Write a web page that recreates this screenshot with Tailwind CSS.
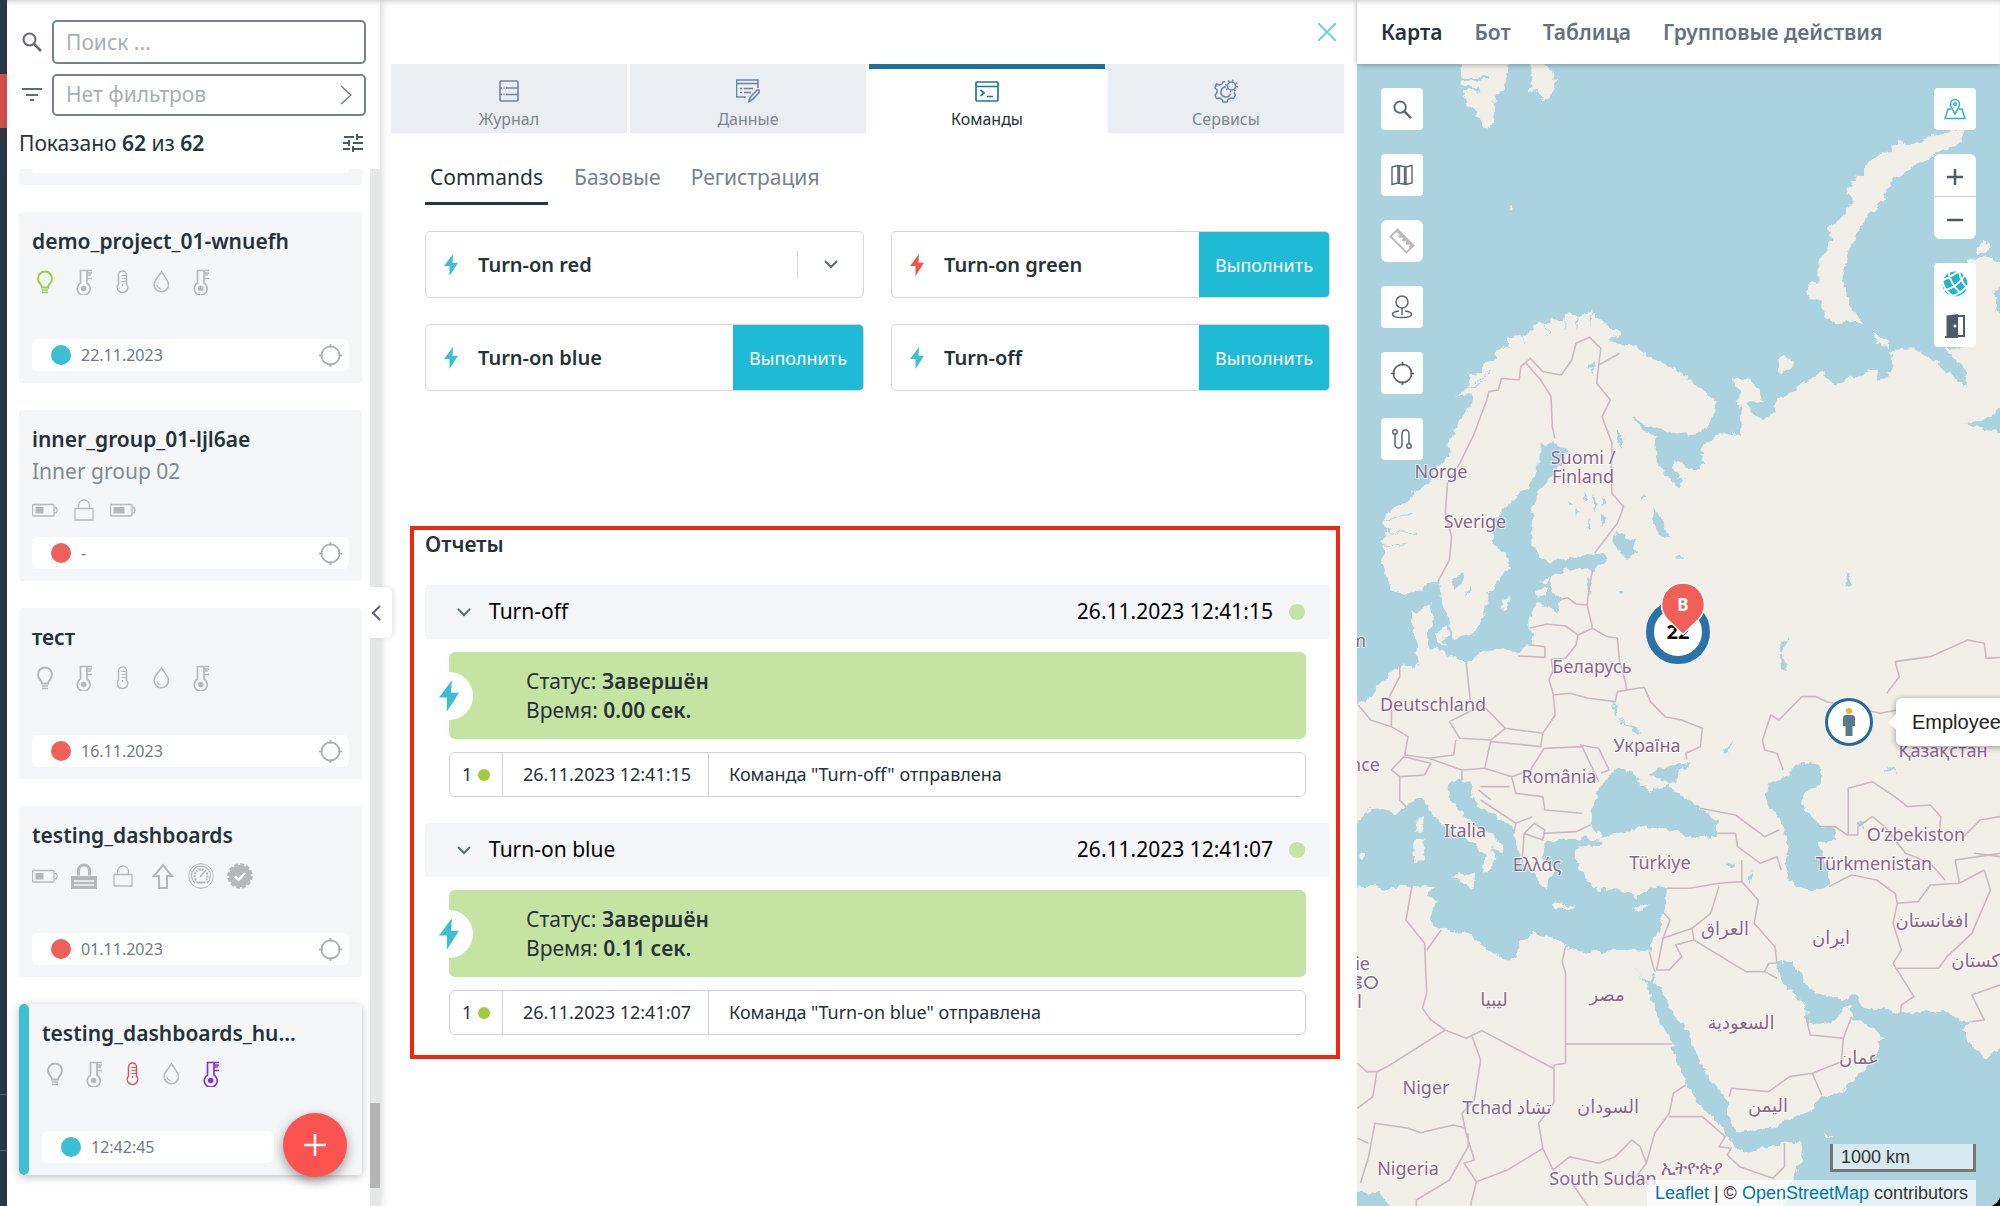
<!DOCTYPE html>
<html lang="ru">
<head>
  <meta charset="UTF-8" />
  <meta name="viewport" content="width=device-width, initial-scale=1.0"/>
  <title>Команды</title>
  <script src="https://cdn.jsdelivr.net/npm/@tailwindcss/browser@4"></script>
</head>
<body class="bg-black font-['Noto_Sans','DejaVu_Sans',sans-serif] text-[#263238]">

  <!-- icon sprite -->
  <svg class="hidden">
    <symbol id="i-search" viewBox="0 0 20 20"><circle cx="7.5" cy="7.5" r="6" fill="none" stroke="currentColor" stroke-width="2"/><path d="M12 12l7 7" stroke="currentColor" stroke-width="2.6"/></symbol>
    <symbol id="i-bulb" viewBox="0 0 26 26"><path d="M10 18.5c0-3.5-4-4-4-9a7 7 0 0 1 14 0c0 5-4 5.500-4 9z" fill="none" stroke="currentColor" stroke-width="2"/><path d="M10 21h6M10 23.500h6" stroke="currentColor" stroke-width="1.300"/></symbol>
    <symbol id="i-thermo" viewBox="0 0 26 26"><path d="M21 1.500H9.500V14a6.500 6.500 0 1 0 6.500 0V1.500M16 6h4M16 9.500h5M16 4h5" fill="none" stroke="currentColor" stroke-width="1.700"/><circle cx="12.700" cy="19.500" r="2.800" fill="currentColor"/></symbol>
    <symbol id="i-temp" viewBox="0 0 26 26"><path d="M8.500 15V6a3.500 3.500 0 0 1 8 0v9a5.200 5.200 0 1 1-8 0z" fill="none" stroke="currentColor" stroke-width="1.500"/><path d="M11.500 6.500h5M11.500 9.500h5M11.500 12.500h5M12.500 15v2" stroke="currentColor" stroke-width="1.200"/></symbol>
    <symbol id="i-drop" viewBox="0 0 26 26"><path d="M12.500 3c3 4.500 7 8.500 7 12.500a7.200 7.200 0 0 1-14.400 0C5.100 11.500 9.500 7.500 12.500 3z" fill="none" stroke="currentColor" stroke-width="1.600"/><path d="M8 16c.3 2 1.500 3.300 3.500 3.500" fill="none" stroke="currentColor" stroke-width="1.200"/></symbol>
    <symbol id="i-battery" viewBox="0 0 26 26"><path d="M1 7.500h20a1 1 0 0 1 1 1v9.500a1 1 0 0 1-1 1H1.500a1 1 0 0 1-1-1v-9.500a1 1 0 0 1 1-1M22 10.500h2.200l1 2.700-1 2.700H22" fill="none" stroke="currentColor" stroke-width="1.300"/><path d="M3.500 10h8v6.500h-8z" fill="currentColor"/></symbol>
    <symbol id="i-battery-mid" viewBox="0 0 26 26"><path d="M1 7.500h20a1 1 0 0 1 1 1v9.500a1 1 0 0 1-1 1H1.500a1 1 0 0 1-1-1v-9.500a1 1 0 0 1 1-1M22 10.500h2.200l1 2.700-1 2.700H22" fill="none" stroke="currentColor" stroke-width="1.300"/><path d="M3.500 10h11v6.500h-11z" fill="currentColor"/></symbol>
    <symbol id="i-lock" viewBox="0 0 26 26"><path d="M4 11.500h18v11.500H4zM7.500 11.500V8.500a5.500 5.500 0 0 1 11 0v3" fill="none" stroke="currentColor" stroke-width="1.300"/></symbol>
    <symbol id="i-padlock" viewBox="0 0 26 26"><path d="M7.500 12.500V7.500a5.500 5.500 0 0 1 11 0v5" fill="none" stroke="currentColor" stroke-width="3"/><path d="M0 13h26v13H0z" fill="currentColor"/><path d="M3 18h20M3 22h20" stroke="#f5f6f8" stroke-width="1.300"/></symbol>
    <symbol id="i-arrow" viewBox="0 0 26 26"><path d="M14 2L5 13H10v12h8V13h5z" fill="none" stroke="currentColor" stroke-width="2"/></symbol>
    <symbol id="i-gauge" viewBox="0 0 26 26"><g fill="none" stroke="currentColor"><circle cx="13" cy="13" r="12.300"/><path d="M7 20a9.500 9.500 0 1 1 12 0" stroke-width="1.200"/><path d="M8 17a6.500 6.500 0 1 1 10 0" stroke-width="2" stroke-dasharray="2 1"/><path d="M12 14l5-6" stroke-width="1.500"/><path d="M8.500 19.500h9" stroke-width="2"/></g></symbol>
    <symbol id="i-verified" viewBox="0 0 26 26"><circle cx="13" cy="13" r="11" fill="currentColor"/><circle cx="13" cy="13" r="11.500" fill="none" stroke="currentColor" stroke-width="2.500" stroke-dasharray="4 2"/><path d="M8 13.500l3.500 3.500 6.500-7" fill="none" stroke="#fff" stroke-width="2.500"/></symbol>
    <symbol id="i-target" viewBox="0 0 24 24"><g fill="none" stroke="currentColor" stroke-width="1.800"><circle cx="12" cy="12" r="9.500"/><path d="M12 0v4M12 20v4M0 12h4M20 12h4"/></g></symbol>
    <symbol id="i-bolt" viewBox="0 0 14 22"><path d="M9 0L0 12h5.500v10L14 8.800H8.500z" fill="currentColor"/></symbol>
    <symbol id="i-down" viewBox="0 0 14 9"><path d="M1 1l6 6 6-6" fill="none" stroke="currentColor" stroke-width="2"/></symbol>
  </svg>

  <div class="flex h-screen min-h-[1100px] overflow-hidden rounded-br-xl bg-white">

    <!-- app rail -->
    <nav class="flex w-[7px] shrink-0 flex-col bg-[#2c394a]">
      <div class="mt-[74px] h-[54px] bg-[#d9534f]"></div>
      <div class="mt-auto mb-[55px] h-[57px] border-y border-[#5d6875]"></div>
    </nav>

    <!-- object list -->
    <aside class="relative z-20 flex w-[373px] shrink-0 flex-col bg-white shadow-[0_0_10px_rgba(0,0,0,0.2)]">
      <div class="flex h-[169px] shrink-0 flex-col pl-3 pr-[14px] pt-5 shadow-[inset_0_5px_5px_-3px_rgba(0,0,0,0.18)]">
        <div class="flex items-center gap-[10px] pl-[3px]">
          <label for="search" class="flex w-5 justify-center text-[#5f6b70]"><svg class="size-5"><use href="#i-search"/></svg></label>
          <input id="search" type="text" placeholder="Поиск ..." class="h-[44px] min-w-0 flex-1 rounded-[5px] border-2 border-[#75828a] px-3 text-[21px] placeholder:text-[#a9afb1]"/>
        </div>
        <div class="mt-[10px] flex items-center gap-[10px] pl-[3px]">
          <svg class="size-5 text-[#5f6b70]" viewBox="0 0 20 20"><path d="M0 4h20M4 10h12M8 15h4" stroke="currentColor" stroke-width="2"/></svg>
          <button class="flex h-[42px] flex-1 items-center justify-between rounded-[5px] border-2 border-[#75828a] px-3 text-[21px] text-[#a9afb1]">
            Нет фильтров
            <svg class="h-5 w-3 text-[#75828a]" viewBox="0 0 12 20"><path d="M1 1l10 9-10 9" fill="none" stroke="currentColor" stroke-width="1.500"/></svg>
          </button>
        </div>
        <div class="mt-3 flex items-center justify-between pr-[3px]">
          <p class="text-[21px] leading-[30px]">Показано <b class="font-semibold">62</b> из <b class="font-semibold">62</b></p>
          <button aria-label="Настройки"><svg class="size-5 text-[#4d585e]" viewBox="0 0 20 20"><path d="M1 4h10M14 4h6M14 1v6M0 10h7M10 10h10M6 7v6M0 16h7M10 16h10M10 13v6" fill="none" stroke="currentColor" stroke-width="2"/></svg></button>
        </div>
      </div>

      <div class="flex min-h-0 flex-1">
        <div class="flex flex-1 flex-col gap-[27px] overflow-hidden pl-3 pr-2">
          <div class="h-4 shrink-0 rounded-b bg-[#f5f6f8] px-[13px]"><div class="h-1 rounded-b bg-white"></div></div>

          <article class="flex h-[171px] shrink-0 flex-col rounded bg-[#f5f6f8] px-[13px] pt-[15px] pb-3">
            <h3 class="text-[21px] leading-[28px] font-semibold">demo_project_01-wnuefh</h3>
            <div class="mt-[14px] flex gap-[13px] text-[#b5b8ba]">
              <svg class="size-[26px] text-[#a4cb41]"><use href="#i-bulb"/></svg>
              <svg class="size-[26px]"><use href="#i-thermo"/></svg>
              <svg class="size-[26px]"><use href="#i-temp"/></svg>
              <svg class="size-[26px]"><use href="#i-drop"/></svg>
              <svg class="size-[26px]"><use href="#i-thermo"/></svg>
            </div>
            <div class="mt-auto flex h-8 items-center rounded-md bg-white pl-[19px] pr-[7px]">
              <span class="size-5 rounded-full bg-[#3dbfd1]"></span>
              <span class="ml-[10px] text-base text-[#6f7b82]">22.11.2023</span>
              <svg class="ml-auto size-[23px] text-[#a9adb0]"><use href="#i-target"/></svg>
            </div>
          </article>

          <article class="flex h-[171px] shrink-0 flex-col rounded bg-[#f5f6f8] px-[13px] pt-[15px] pb-3">
            <h3 class="text-[21px] leading-[28px] font-semibold">inner_group_01-ljl6ae</h3>
            <p class="mt-1 text-[21px] leading-[28px] text-[#808a8f]">Inner group 02</p>
            <div class="mt-3 flex gap-[13px] text-[#b5b8ba]">
              <svg class="size-[26px]"><use href="#i-battery"/></svg>
              <svg class="size-[26px]"><use href="#i-lock"/></svg>
              <svg class="size-[26px]"><use href="#i-battery-mid"/></svg>
            </div>
            <div class="mt-auto flex h-8 items-center rounded-md bg-white pl-[19px] pr-[7px]">
              <span class="size-5 rounded-full bg-[#ee6059]"></span>
              <span class="ml-[10px] text-base text-[#6f7b82]">-</span>
              <svg class="ml-auto size-[23px] text-[#a9adb0]"><use href="#i-target"/></svg>
            </div>
          </article>

          <article class="flex h-[171px] shrink-0 flex-col rounded bg-[#f5f6f8] px-[13px] pt-[15px] pb-3">
            <h3 class="text-[21px] leading-[28px] font-semibold">тест</h3>
            <div class="mt-[14px] flex gap-[13px] text-[#b5b8ba]">
              <svg class="size-[26px]"><use href="#i-bulb"/></svg>
              <svg class="size-[26px]"><use href="#i-thermo"/></svg>
              <svg class="size-[26px]"><use href="#i-temp"/></svg>
              <svg class="size-[26px]"><use href="#i-drop"/></svg>
              <svg class="size-[26px]"><use href="#i-thermo"/></svg>
            </div>
            <div class="mt-auto flex h-8 items-center rounded-md bg-white pl-[19px] pr-[7px]">
              <span class="size-5 rounded-full bg-[#ee6059]"></span>
              <span class="ml-[10px] text-base text-[#6f7b82]">16.11.2023</span>
              <svg class="ml-auto size-[23px] text-[#a9adb0]"><use href="#i-target"/></svg>
            </div>
          </article>

          <article class="flex h-[171px] shrink-0 flex-col rounded bg-[#f5f6f8] px-[13px] pt-[15px] pb-3">
            <h3 class="text-[21px] leading-[28px] font-semibold">testing_dashboards</h3>
            <div class="mt-[14px] flex gap-[13px] text-[#b5b8ba]">
              <svg class="size-[26px]"><use href="#i-battery"/></svg>
              <svg class="size-[26px]"><use href="#i-padlock"/></svg>
              <svg class="size-[26px]"><use href="#i-lock"/></svg>
              <svg class="size-[26px]"><use href="#i-arrow"/></svg>
              <svg class="size-[26px]"><use href="#i-gauge"/></svg>
              <svg class="size-[26px]"><use href="#i-verified"/></svg>
            </div>
            <div class="mt-auto flex h-8 items-center rounded-md bg-white pl-[19px] pr-[7px]">
              <span class="size-5 rounded-full bg-[#ee6059]"></span>
              <span class="ml-[10px] text-base text-[#6f7b82]">01.11.2023</span>
              <svg class="ml-auto size-[23px] text-[#a9adb0]"><use href="#i-target"/></svg>
            </div>
          </article>

          <!-- selected object -->
          <article class="flex h-[171px] shrink-0 rounded bg-[#f5f6f8] shadow-[0_2px_8px_rgba(0,0,0,0.25)]">
            <div class="w-[10px] rounded-full bg-[#3dbfd1]"></div>
            <div class="flex min-w-0 flex-1 flex-col px-[13px] pt-[15px] pb-3">
              <h3 class="text-[21px] leading-[28px] font-semibold">testing_dashboards_hu...</h3>
              <div class="mt-[14px] flex gap-[13px] text-[#b5b8ba]">
                <svg class="size-[26px]"><use href="#i-bulb"/></svg>
                <svg class="size-[26px]"><use href="#i-thermo"/></svg>
                <svg class="size-[26px] text-[#e5534f]"><use href="#i-temp"/></svg>
                <svg class="size-[26px]"><use href="#i-drop"/></svg>
                <svg class="size-[26px] text-[#8a2fd0]"><use href="#i-thermo"/></svg>
              </div>
              <div class="mt-auto flex h-8 w-[232px] items-center rounded-md bg-white pl-[19px]">
                <span class="size-5 rounded-full bg-[#3dbfd1]"></span>
                <span class="ml-[10px] text-base text-[#6f7b82]">12:42:45</span>
              </div>
            </div>
          </article>
        </div>
        <div class="flex w-[10px] flex-col justify-end bg-[#e6e7e7]"><div class="mb-[18px] h-[85px] bg-[#b5b5b5]"></div></div>
      </div>

      <button aria-label="Добавить" class="absolute right-[33px] bottom-[29px] flex size-16 items-center justify-center rounded-full bg-[#fb5450] shadow-[0_4px_12px_rgba(0,0,0,0.4)]">
        <svg class="size-[22px]" viewBox="0 0 22 22"><path d="M11 0v22M0 11h22" stroke="#fff" stroke-width="2.500"/></svg>
      </button>
      <button aria-label="Свернуть" class="absolute top-[587px] -right-3 flex h-[51px] w-[22px] items-center justify-start rounded-r-md bg-white pl-px shadow-[3px_0_4px_rgba(0,0,0,0.08)]">
        <svg class="h-4 w-[10px]" viewBox="0 0 10 16"><path d="M9 1L2 8l7 7" fill="none" stroke="#5f6b70" stroke-width="2.200"/></svg>
      </button>
    </aside>

    <!-- object panel -->
    <main class="flex min-w-0 flex-[953] flex-col pl-[11px] pr-[13px] shadow-[inset_0_5px_5px_-3px_rgba(0,0,0,0.18)]">
      <div class="flex h-16 shrink-0 items-center justify-end pr-2">
        <button aria-label="Закрыть"><svg class="size-[18px]" viewBox="0 0 18 18"><path d="M0 0l18 18M18 0L0 18" stroke="#6fd2d6" stroke-width="2"/></svg></button>
      </div>
      <div class="grid grid-cols-4 gap-[3px] text-base text-[#7d878f]">
        <button class="flex h-[69px] flex-col items-center border-t-[5px] border-[#eaedf1] bg-[#eaedf1] pt-[10px] leading-[32px]">
          <svg class="size-6 shrink-0 text-[#6d86a3]" viewBox="0 0 24 24"><path d="M4 2h16a1 1 0 0 1 1 1v18a1 1 0 0 1-1 1H4a1 1 0 0 1-1-1V3a1 1 0 0 1 1-1zM9 9h12M3 9h2M9 15.500h12M3 15.500h2M6.500 9h1M6.500 15.500h1" fill="none" stroke="currentColor" stroke-width="1.600"/></svg>
          Журнал
        </button>
        <button class="flex h-[69px] flex-col items-center border-t-[5px] border-[#eaedf1] bg-[#eaedf1] pt-[10px] leading-[32px]">
          <svg class="size-6 shrink-0 text-[#6d86a3]" viewBox="0 0 24 24"><g fill="none" stroke="currentColor" stroke-width="1.600"><path d="M10 18H1.500a1 1 0 0 1-1-1V1h21.500v8M.5 4.500h21.500M4 9.500h2M8 9.500h9M4 13.500h2M8 13.500h7"/><path d="M13 22.500l1-4 6.500-7c2-1.500 3.500 0 2.500 2l-6.500 7z"/></g></svg>
          Данные
        </button>
        <button class="flex h-[69px] flex-col items-center border-t-[5px] border-[#1f7099] bg-white pt-[10px] leading-[32px] text-[#263238]">
          <svg class="size-6 shrink-0 text-[#1f76a3]" viewBox="0 0 24 24"><path d="M2 3h20a1 1 0 0 1 1 1v17a1 1 0 0 1-1 1H2a1 1 0 0 1-1-1V4a1 1 0 0 1 1-1zM1 7.500h22" fill="none" stroke="currentColor" stroke-width="1.700"/><path d="M5.500 11l3.500 3-3.500 3M12 17.500h6" fill="none" stroke="currentColor" stroke-width="1.700"/></svg>
          Команды
        </button>
        <button class="flex h-[69px] flex-col items-center border-t-[5px] border-[#eaedf1] bg-[#eaedf1] pt-[10px] leading-[32px]">
          <svg class="size-6 shrink-0 text-[#6d86a3]" viewBox="0 0 24 24"><g fill="none" stroke="currentColor" stroke-width="1.500"><path d="M11 2.500L9 3l-1 2-2.500 1-3-1L1 9l2 2v3l-2 2 1.500 3.500 3-.5 2.500 1.500 1 2.500h4l1-2.500 2.500-1.500 3 .5L21.500 16l-1.500-2.500"/><path d="M12 8a5 5 0 1 0 4.500 7"/><circle cx="17.500" cy="7" r="4"/><circle cx="17.500" cy="7" r="5.500" stroke-width="2" stroke-dasharray="1.500 2.800"/></g></svg>
          Сервисы
        </button>
      </div>

      <div class="mt-[27px] flex gap-[22px] px-[34px] text-[21px] leading-[34px] text-[#77828a]">
        <button class="border-b-[3px] border-[#263743] px-[5px] pb-2 text-[#263238]">Commands</button>
        <button class="border-b-[3px] border-transparent px-1 pb-2">Базовые</button>
        <button class="border-b-[3px] border-transparent px-1 pb-2">Регистрация</button>
      </div>

      <div class="mt-[26px] grid grid-cols-2 gap-x-[27px] gap-y-[26px] pl-[34px] pr-[14px]">
        <div class="flex h-[67px] items-center rounded-[5px] border border-[#d5d8da] pl-[18px]">
          <svg class="h-[22px] w-[14px] text-[#3dbfd1]"><use href="#i-bolt"/></svg>
          <span class="ml-5 text-xl font-semibold">Turn-on red</span>
          <button aria-label="Развернуть" class="ml-auto flex h-7 w-[66px] items-center justify-center border-l border-[#d5d8da] text-[#5f6b70]"><svg class="h-[9px] w-[14px]"><use href="#i-down"/></svg></button>
        </div>
        <div class="flex h-[67px] items-center overflow-hidden rounded-[5px] border border-[#d5d8da] pl-[18px]">
          <svg class="h-[22px] w-[14px] text-[#f0524c]"><use href="#i-bolt"/></svg>
          <span class="ml-5 text-xl font-semibold">Turn-on green</span>
          <button class="ml-auto h-full w-[130px] bg-[#1fbad6] text-lg text-white">Выполнить</button>
        </div>
        <div class="flex h-[67px] items-center overflow-hidden rounded-[5px] border border-[#d5d8da] pl-[18px]">
          <svg class="h-[22px] w-[14px] text-[#3dbfd1]"><use href="#i-bolt"/></svg>
          <span class="ml-5 text-xl font-semibold">Turn-on blue</span>
          <button class="ml-auto h-full w-[130px] bg-[#1fbad6] text-lg text-white">Выполнить</button>
        </div>
        <div class="flex h-[67px] items-center overflow-hidden rounded-[5px] border border-[#d5d8da] pl-[18px]">
          <svg class="h-[22px] w-[14px] text-[#3dbfd1]"><use href="#i-bolt"/></svg>
          <span class="ml-5 text-xl font-semibold">Turn-off</span>
          <button class="ml-auto h-full w-[130px] bg-[#1fbad6] text-lg text-white">Выполнить</button>
        </div>
      </div>

      <!-- reports -->
      <section class="mt-[135px] mr-1 ml-[19px] border-4 border-[#e92b14] pr-1.5 pb-5 pl-[11px]">
        <h2 class="text-[21px] leading-[28px] font-semibold">Отчеты</h2>

        <div class="mt-[27px] flex h-[54px] items-center rounded bg-[#f5f6f8] pr-[25px] pl-8 text-[21px] text-black">
          <svg class="h-[9px] w-[14px] text-[#5f6b70]"><use href="#i-down"/></svg>
          <span class="ml-[18px]">Turn-off</span>
          <span class="ml-auto">26.11.2023 12:41:15</span>
          <span class="ml-4 size-4 rounded-full bg-[#c5e4a4]"></span>
        </div>
        <div class="relative mt-[13px] mr-6 ml-6 flex h-[87px] flex-col justify-center rounded-md bg-[#c5e4a4] pl-[77px] text-[21px] leading-[29px]">
          <div class="absolute top-5 -left-6 flex size-12 items-center justify-center rounded-full bg-white"><svg class="h-8 w-5 text-[#3dbfd1]" viewBox="0 0 14 22"><use href="#i-bolt"/></svg></div>
          <p>Статус: <b class="font-semibold">Завершён</b></p>
          <p>Время: <b class="font-semibold">0.00 сек.</b></p>
        </div>
        <div class="mt-[13px] mr-6 ml-6 flex h-[45px] items-stretch rounded-md border border-[#cfd3d5] text-[18px] leading-[43px]">
          <div class="flex w-[53px] items-center gap-1.5 border-r border-[#cfd3d5] pl-3">1<span class="size-3 rounded-full bg-[#9fcc3f]"></span></div>
          <div class="w-[206px] border-r border-[#cfd3d5] pl-5">26.11.2023 12:41:15</div>
          <div class="pl-5">Команда "Turn-off" отправлена</div>
        </div>

        <div class="mt-[26px] flex h-[54px] items-center rounded bg-[#f5f6f8] pr-[25px] pl-8 text-[21px] text-black">
          <svg class="h-[9px] w-[14px] text-[#5f6b70]"><use href="#i-down"/></svg>
          <span class="ml-[18px]">Turn-on blue</span>
          <span class="ml-auto">26.11.2023 12:41:07</span>
          <span class="ml-4 size-4 rounded-full bg-[#c5e4a4]"></span>
        </div>
        <div class="relative mt-[13px] mr-6 ml-6 flex h-[87px] flex-col justify-center rounded-md bg-[#c5e4a4] pl-[77px] text-[21px] leading-[29px]">
          <div class="absolute top-5 -left-6 flex size-12 items-center justify-center rounded-full bg-white"><svg class="h-8 w-5 text-[#3dbfd1]" viewBox="0 0 14 22"><use href="#i-bolt"/></svg></div>
          <p>Статус: <b class="font-semibold">Завершён</b></p>
          <p>Время: <b class="font-semibold">0.11 сек.</b></p>
        </div>
        <div class="mt-[13px] mr-6 ml-6 flex h-[45px] items-stretch rounded-md border border-[#cfd3d5] text-[18px] leading-[43px]">
          <div class="flex w-[53px] items-center gap-1.5 border-r border-[#cfd3d5] pl-3">1<span class="size-3 rounded-full bg-[#9fcc3f]"></span></div>
          <div class="w-[206px] border-r border-[#cfd3d5] pl-5">26.11.2023 12:41:07</div>
          <div class="pl-5">Команда "Turn-on blue" отправлена</div>
        </div>
      </section>
    </main>

    <!-- map column -->
    <section class="flex min-w-0 flex-[643] flex-col">
      <nav class="z-10 flex h-16 shrink-0 items-center gap-8 bg-white pt-0.5 pl-6 text-[21px] font-semibold text-[#66727b] shadow-[0_1px_5px_rgba(0,0,0,0.3),inset_0_5px_5px_-3px_rgba(0,0,0,0.18)]">
        <a href="#" class="text-[#263238]">Карта</a>
        <a href="#">Бот</a>
        <a href="#">Таблица</a>
        <a href="#" class="whitespace-nowrap">Групповые действия</a>
      </nav>

      <div class="relative min-h-0 flex-1 overflow-hidden bg-[#aad3df]">
        <svg class="absolute inset-0 size-full" viewBox="0 0 643 1142" preserveAspectRatio="xMinYMin slice">
          <!-- roughens the coastlines -->
          <filter id="coast" x="-5%" y="-5%" width="110%" height="110%">
            <feTurbulence type="fractalNoise" baseFrequency="0.120" numOctaves="3" seed="4"/>
            <feDisplacementMap in="SourceGraphic" scale="9" xChannelSelector="R" yChannelSelector="G"/>
          </filter>
          <g filter="url(#coast)">
          <g transform="translate(-7 -64) scale(.41455 .33333)" stroke-linejoin="round">
            <!-- land -->
            <g fill="#f2efe9">
              <path d="M85 1720L75 1690 85 1660 75 1630 90 1610 78 1560 110 1520 140 1505 165 1465 190 1450 215 1400 240 1370 235 1330 255 1290 270 1250 300 1200 292 1185 250 1190 290 1160 285 1120 320 1115 325 1085 345 1080 360 1040 385 1040 380 1010 415 1005 440 990 455 965 485 970 480 950 510 960 530 930 545 955 580 935 610 965 640 985 650 1005 625 1020 660 1035 690 1030 695 1055 740 1080 790 1110 830 1150 860 1180 880 1200 880 1230 865 1280 830 1308 760 1295 700 1265 680 1250 700 1280 735 1310 740 1380 770 1440 795 1460 803 1440 775 1400 790 1380 830 1410 858 1390 845 1350 880 1310 915 1295 940 1310 945 1240 935 1200 945 1180 920 1133 960 1135 990 1170 1000 1200 955 1205 970 1235 990 1262 1020 1240 1030 1200 1060 1180 1095 1150 1140 1110 1150 1135 1170 1160 1195 1135 1230 1130 1265 1105 1275 1140 1300 1130 1310 1090 1300 1050 1360 1045 1420 1090 1480 1160 1490 1120 1455 1070 1440 1045 1500 1040 1495 780 1520 770 1600 790 1700 790 1700 3700 -60 3700 -60 2120 18 2110 40 2100 65 2070 85 2030 120 1995 165 2000 160 1960 165 1940 150 1890 150 1840 175 1830 195 1812 200 1860 185 1900 192 1945 225 1950 230 1970 255 1968 285 1985 310 1960 370 1945 405 1960 435 1930 440 1920 433 1885 433 1850 455 1805 480 1825 500 1840 507 1800 490 1770 485 1735 520 1705 585 1710 625 1675 590 1658 560 1670 480 1685 455 1665 440 1640 440 1530 455 1470 510 1390 525 1350 490 1330 460 1335 455 1390 450 1410 430 1460 375 1520 350 1560 345 1630 375 1660 383 1700 335 1780 325 1840 300 1905 250 1920 240 1860 220 1810 215 1745 200 1745 160 1778 125 1788 100 1770z"/>
              <path d="M1480 390L1420 398 1380 420 1340 430 1320 422 1300 450 1270 470 1240 500 1240 520 1200 560 1208 600 1195 640 1155 690 1165 720 1130 790 1130 840 1103 850 1108 900 1130 905 1150 950 1180 975 1200 960 1235 970 1205 910 1190 840 1200 760 1240 660 1290 590 1310 540 1350 505 1410 465 1470 430z"/>
              <path d="M265 150L385 150 380 225 370 270 350 290 345 370 330 390 305 340 285 320 270 270zM430 150L470 192 500 240 490 280 470 305 455 270 430 280 440 235z"/>
              <path d="M1030 1080L1048 1065 1072 1085 1062 1110 1040 1122 1030 1105zM1262 990L1300 1030 1300 1045 1270 1030zM1512 735L1525 722 1545 740 1530 762 1512 755zM383 615h7v16h-7z"/>
              <path d="M455 1745L480 1735 478 1750 460 1755zM450 1770L478 1765 470 1785 455 1790zM368 1800L385 1790 378 1830 365 1840zM205 1900L235 1880 240 1905 220 1920 235 1935 205 1925z"/>
            </g>

            <!-- seas and lakes -->
            <g fill="#aad3df">
              <path d="M-60 2480L18 2465 40 2432 80 2428 110 2440 135 2420 165 2395 188 2410 200 2450 240 2490 290 2520 325 2560 320 2620 345 2600 350 2565 340 2540 370 2555 370 2530 310 2485 275 2445 245 2400 235 2365 240 2345 270 2338 290 2360 300 2410 340 2440 395 2485 400 2530 415 2590 450 2635 470 2672 478 2640 498 2615 465 2570 470 2530 505 2520 560 2515 610 2520 605 2535 550 2540 545 2580 565 2630 600 2670 640 2665 690 2690 730 2665 765 2662 758 2740 735 2820 722 2855 650 2845 600 2860 520 2840 490 2810 440 2798 410 2830 402 2875 370 2875 310 2830 290 2805 220 2785 190 2760 210 2710 190 2685 205 2658 150 2655 80 2670 60 2660 -60 2665z"/>
              <path d="M640 2305L680 2312 690 2330 710 2340 740 2310 790 2295 830 2282 800 2310 770 2360 820 2400 885 2460 885 2510 840 2515 760 2485 700 2480 650 2500 610 2510 580 2470 600 2365 625 2330z"/>
              <path d="M1075 2295L1110 2290 1138 2295 1133 2355 1100 2380 1092 2400 1098 2430 1120 2455 1130 2480 1165 2480 1170 2520 1130 2530 1150 2600 1157 2662 1110 2672 1060 2645 1045 2600 1060 2550 1050 2490 1015 2420 1003 2390 1012 2350 1050 2330z"/>
              <path d="M680 2888L700 2925 722 2945 737 2910 733 2950 745 2955 780 3040 820 3100 825 3140 860 3220 910 3300 915 3360 930 3400 1020 3380 1110 3330 1130 3295 1190 3270 1240 3210 1265 3170 1285 3115 1260 3080 1215 3060 1212 3012 1195 3025 1160 3070 1105 3072 1088 3030 1100 3015 1075 2990 1040 2940 1033 2890 1070 2883 1090 2940 1130 2980 1190 3000 1222 2980 1230 3020 1330 3040 1435 3030 1470 3062 1498 3062 1478 3090 1500 3140 1530 3170 1555 3160 1600 3110 1700 3110 1700 3700 1020 3700 1070 3535 1090 3480 1095 3422 1040 3430 950 3462 935 3450 910 3400 880 3360 840 3310 810 3250 790 3190 775 3120 750 3070 725 2990 715 2955z"/>
              <path d="M-60 3570L75 3580 95 3620 90 3700 -60 3700z"/>
              <path d="M640 1590L685 1625 690 1660 665 1675 635 1630zM732 1520L750 1550 768 1615 745 1605 728 1550zM572 1735L580 1740 577 1785 570 1770zM250 1730L275 1722 268 1755 245 1770zM285 1760L292 1755 280 1800zM640 1295L660 1320 650 1350zM705 1480l10 10-10 10zM1035 1930L1060 1915 1050 1940 1040 1960 1055 2000 1040 2010zM1200 1715L1212 1750 1195 1760zM900 2250L925 2220 905 2260zM640 2100L645 2150 700 2195 690 2200 635 2140zM1480 1270L1530 1260 1568 1230 1600 1230 1600 1300 1530 1290zM1290 2310L1310 2300 1320 2315zM1225 2470L1250 2460 1235 2490zM905 2600L930 2590 920 2610zM965 2610L975 2640 962 2645zM1555 870L1600 850 1600 950 1560 930zM575 1095L595 1090 585 1120zM790 1668h15v8h-15zM650 1770h12v8h-12z"/>
              <path d="M560 1480l12 18-6 14zM585 1485l10 30-8 20zM610 1480l6 26-9 14zM545 1520l10 20-8 8zM605 1540l14 10-12 30zM575 1560l8 20-10 12zM530 1500l8 12-10 6z"/>
            </g>

            <!-- islands -->
            <g fill="#f2efe9">
              <path d="M160 2455L178 2448 175 2495 163 2500zM152 2525L180 2518 178 2585 155 2590zM242 2625L302 2620 297 2668 270 2650zM485 2710L545 2720 540 2728 490 2720zM680 2725L725 2710 700 2738zM690 2345L720 2322 775 2350 720 2372zM25 2565h12v8h-12zM1088 3018l14 6-2 30-10-4zM1145 3405h22v6h-22z"/>
            </g>

            <!-- fjords -->
            <g fill="none" stroke="#aad3df" stroke-width="1">
              <path vector-effect="non-scaling-stroke" d="M80 1560L150 1540M78 1590L160 1600M75 1640L140 1630M300 1150L340 1110M410 1000L425 1030M470 960L480 1000M520 930L518 990M550 940L545 985M585 940L580 975M250 1190L330 1140"/>
              <path stroke-width="3" vector-effect="non-scaling-stroke" d="M265 240L335 232M270 265L310 268"/>
            </g>
          </g>
          </g>

          <!-- borders -->
          <g transform="translate(-7 -64) scale(.41455 .33333)" fill="none" stroke="#cbb8c3" stroke-width="1.600" stroke-linejoin="round">
            <path vector-effect="non-scaling-stroke" d="M330 1200L335 1175 358 1170 365 1135 408 1140 412 1100 435 1075 465 1115 510 1125 535 1080 545 1030 578 1012 605 1045 600 1095 650 1060M600 1095L595 1150 628 1200 608 1250 632 1330 630 1420 632 1480 660 1520 645 1570 590 1660M425 1090L460 1140 485 1190 488 1280 494 1315M330 1200L300 1300 265 1390 235 1450 230 1540 245 1610 240 1680 212 1745"/>
            <path vector-effect="non-scaling-stroke" d="M585 1710L575 1780 572 1815 585 1885 620 1910 645 1915 650 1980 665 2050 668 2072M505 1800L525 1793 545 1812 572 1815M433 1885L475 1872 520 1878 550 1905 585 1885M550 1905L545 1935 520 1975 485 1978M405 1968L470 1972 470 1940 435 1935M485 1978L490 2010 480 2040 490 2080 495 2145 465 2200M490 2085L530 2080 575 2095 640 2105 645 2075 710 2062 725 2105 760 2150 800 2160 850 2185 845 2240 810 2260 812 2278"/>
            <path vector-effect="non-scaling-stroke" d="M280 1985L285 2040 290 2100M120 1995L120 2030 95 2090 100 2130 100 2180 140 2210 132 2265 190 2275 250 2265 255 2220M20 2115L50 2160 100 2180M240 2165L320 2115 375 2185 340 2220 265 2215 240 2165M375 2185L465 2200 460 2240 400 2232 340 2225M340 2220L325 2305 270 2310 190 2275M325 2305L390 2330 435 2310 468 2245 560 2240 600 2345M390 2330L400 2380 465 2390 470 2430 560 2440M555 2235L600 2245 625 2310 605 2320M100 2310L130 2270 195 2290 180 2325 120 2330 100 2310M120 2330L120 2400 135 2420M270 2310L270 2340M315 2360L385 2360M315 2400L370 2445 400 2470 440 2450M400 2470L395 2500M420 2500L415 2590M420 2500L445 2470 470 2490 465 2520 420 2500M470 2500L545 2495 580 2475M340 2400L310 2370"/>
            <path vector-effect="non-scaling-stroke" d="M1045 2310L1030 2260 1000 2250 995 2220 1015 2145 1035 2160 1090 2090 1125 2090 1150 2105 1280 2140 1320 2130M1295 2080L1325 2030 1315 1985 1400 1970 1490 1920 1530 1930 1535 1975 1600 1970M1202 2505L1202 2365 1260 2345 1320 2395 1345 2420 1400 2415 1425 2450 1422 2490M1130 2480L1170 2480 1200 2505 1225 2505 1225 2480 1260 2450 1290 2480 1340 2560 1400 2590 1435 2640M1480 2510L1520 2460 1568 2450M1505 2560L1568 2570M1470 2650L1460 2580 1568 2560"/>
            <path vector-effect="non-scaling-stroke" d="M1155 2660L1210 2625 1270 2640 1315 2680 1320 2710 1310 2770 1330 2850 1310 2890 1360 2990 1330 3015 1328 3040M1320 2710L1370 2705 1400 2655 1470 2650 1530 2610 1545 2670 1500 2800 1440 2870 1420 2905 1320 2905M1600 2940L1500 2985 1530 3060 1500 3065M845 2425L930 2445 1000 2510 1035 2490M885 2500L930 2500 935 2540 990 2590 1030 2570 1040 2610M945 2580L945 2645 985 2700 975 2770 1025 2840 1030 2890M765 2665L820 2665 890 2650 945 2645M890 2660L870 2740 825 2785 755 2815M825 2785L830 2820 955 2915 1000 2915 1030 2935M830 2820L785 2835 800 2870 770 2910 740 2910 755 2815M722 2855L735 2915M758 2740L772 2760 755 2815M1000 2915L1010 2890 1030 2890"/>
            <path vector-effect="non-scaling-stroke" d="M915 3290L920 3265 1010 3275 1060 3230 1115 3220 1185 3185 1190 3115 1110 3105 1100 3050M1115 3220L1138 3285M1190 3115L1210 3050M520 2840L512 2885 520 2920 520 3190 492 3195 492 3310M520 3132L778 3132M150 2655L135 2760 180 2830 185 2980 175 3025 195 3060 230 3090 280 3115 318 3092 490 3205M185 2850L220 2790M230 3090L90 3200 65 3215 40 3215 18 3190M65 3215L55 3290 18 3325M295 3110L315 3180 300 3300 270 3340 280 3400M280 3385L250 3375 215 3385 170 3398 140 3385 60 3370 45 3470 25 3550M18 3415L45 3430M285 3400L285 3440 240 3540 160 3600 160 3700M280 3400L300 3480 275 3490 305 3545 380 3510 465 3445 455 3370 492 3310M305 3545L290 3620 290 3700M465 3445L490 3510 530 3470 600 3490 640 3470 680 3420 700 3440 715 3490 735 3400 770 3340 780 3280 810 3255M770 3350L850 3350 905 3410 890 3440 920 3445 910 3465 940 3500 1020 3535 1048 3500 1048 3430M715 3490L690 3530 730 3560M530 3540L575 3620"/>
          </g>

          <!-- country labels -->
          <g transform="translate(-1357 -64)" text-anchor="middle" class="fill-[#85688a] stroke-white/70 stroke-2 text-[18px] [paint-order:stroke]">
            <text x="1441" y="478">Norge</text>
            <text x="1583" y="464">Suomi /</text>
            <text x="1583" y="483">Finland</text>
            <text x="1475" y="528">Sverige</text>
            <text x="1592" y="673">Беларусь</text>
            <text x="1433" y="711">Deutschland</text>
            <text x="1647" y="752">Україна</text>
            <text x="1559" y="783">România</text>
            <text x="1943" y="757">Қазақстан</text>
            <text x="1465" y="837">Italia</text>
            <text x="1537" y="871">Ελλάς</text>
            <text x="1660" y="869">Türkiye</text>
            <text x="1916" y="841">Oʻzbekiston</text>
            <text x="1874" y="870">Türkmenistan</text>
            <text x="1725" y="935">العراق</text>
            <text x="1831" y="944">ايران</text>
            <text x="1932" y="927">افغانستان</text>
            <text x="1981" y="967">پاکستان</text>
            <text x="1494" y="1006">ليبيا</text>
            <text x="1607" y="1001">مصر</text>
            <text x="1741" y="1029">السعودية</text>
            <text x="1859" y="1064">عمان</text>
            <text x="1426" y="1094">Niger</text>
            <text x="1507" y="1114">Tchad تشاد</text>
            <text x="1608" y="1113">السودان</text>
            <text x="1768" y="1112">اليمن</text>
            <text x="1408" y="1175">Nigeria</text>
            <text x="1603" y="1185">South Sudan</text>
            <text x="1692" y="1174">ኢትዮጵያ</text>
            <g text-anchor="end">
              <text x="1366" y="647">United Kingdom</text>
              <text x="1380" y="771">France</text>
              <text x="1370" y="970">Algérie</text>
              <text x="1379" y="989">ⵍⵣⵣⴰⵢⴻⵔ</text>
            </g>
            <text x="1336" y="1008">الجزائر</text>
          </g>
        </svg>

        <!-- cluster, pin and employee marker -->
        <div class="absolute top-[536px] left-[289px] flex size-16 items-center justify-center rounded-full border-8 border-[#2a72a8] bg-white text-xl font-bold text-black">22</div>
        <svg class="absolute top-[518px] left-[303px] h-[54px] w-[46px]" viewBox="0 0 46 54"><path d="M23 52.500L7.500 37.500a21.500 21.500 0 1 1 31 0z" fill="#f05f58" stroke="#fff" stroke-width="1.500"/><text x="23" y="29" text-anchor="middle" class="fill-white text-[17px] font-bold">B</text></svg>
        <div class="absolute top-[634px] left-[468px] flex size-12 items-center justify-center rounded-full border-3 border-[#27699b] bg-white">
          <svg class="h-7 w-3" viewBox="0 0 12 28"><circle cx="6" cy="3" r="3" fill="#f9ad3c"/><path d="M3 7h6a3 3 0 0 1 3 3v8H9.500v10h-7V18H0v-8a3 3 0 0 1 3-3z" fill="#587b8c"/></svg>
        </div>
        <div class="absolute top-[634px] left-[539px] h-12 w-40 rounded-md bg-white pl-4 font-['Liberation_Sans',sans-serif] text-xl leading-[48px] text-[#222] shadow-[0_1px_6px_rgba(0,0,0,0.4)]">
          <svg class="absolute top-4 -left-2 h-4 w-2" viewBox="0 0 8 16"><path d="M8 0L0 8l8 8z" fill="#fff"/></svg>
          Employee
        </div>

        <!-- left toolbar -->
        <div class="absolute top-6 left-6 flex flex-col gap-6 text-[#5b6670]">
          <button aria-label="Поиск" class="flex size-[42px] items-center justify-center rounded bg-white"><svg class="size-[19px]"><use href="#i-search"/></svg></button>
          <button aria-label="Слои" class="flex size-[42px] items-center justify-center rounded bg-white"><svg class="size-[22px]" viewBox="0 0 22 22"><path d="M1 3l6-1.500 8 1.500 6-1.500v17.500L15 20.500 7 19l-6 1.500zM7 1.500V19M8.500 2v17M15 3v17.500M13.500 3v17" fill="none" stroke="currentColor" stroke-width="1.400"/></svg></button>
          <button aria-label="Линейка" class="flex size-[42px] items-center justify-center rounded-md bg-white text-[#b9b9b9]"><svg class="size-[26px]" viewBox="0 0 26 26"><path d="M1.500 8.500L8.500 1.500l16 16-7 7z" fill="none" stroke="currentColor" stroke-width="1.800"/><path d="M8.500 1.500l16 16-3 3-1.500-1.500 1-2.500-3.500.5-1-1 1-3-3.500.5-1-1 1-3-3.500.5-1-1 1-3L6 4z" fill="currentColor"/></svg></button>
          <button aria-label="Точка" class="flex size-[42px] items-center justify-center rounded bg-white"><svg class="size-6" viewBox="0 0 24 24"><g fill="none" stroke="currentColor" stroke-width="1.500"><circle cx="12" cy="7" r="6"/><path d="M12 13v7M9 16c-4 .5-6.500 1.700-6.500 3.200 0 2 4 3.300 9.500 3.300s9.500-1.300 9.500-3.300c0-1.500-2.500-2.700-6.500-3.200"/></g></svg></button>
          <button aria-label="Центр" class="flex size-[42px] items-center justify-center rounded bg-white"><svg class="size-[23px]"><use href="#i-target"/></svg></button>
          <button aria-label="Маршрут" class="flex size-[42px] items-center justify-center rounded bg-white"><svg class="size-5" viewBox="0 0 20 20"><g fill="none" stroke="currentColor" stroke-width="1.500"><circle cx="3" cy="3" r="2.200"/><circle cx="17" cy="17" r="2.200"/><path d="M3 5v10.500a3.500 3.500 0 0 0 7 0v-11a3.500 3.500 0 0 1 7 0V15"/></g></svg></button>
        </div>

        <!-- right toolbar -->
        <div class="absolute top-6 right-6 flex flex-col gap-6 text-[#4d5c68]">
          <button aria-label="Карта" class="flex size-[42px] items-center justify-center rounded bg-white text-[#2cb5c8]"><svg class="size-[22px]" viewBox="0 0 22 22"><g fill="none" stroke="currentColor" stroke-width="1.500"><path d="M7 11H4L1 20.500h20L18 11h-3M11 16C9 12 6.500 9 6.500 6a4.500 4.500 0 0 1 9 0c0 3-2.500 6-4.500 10z"/><circle cx="11" cy="6" r="1.300"/></g></svg></button>
          <div class="flex flex-col rounded-md bg-white">
            <button aria-label="Приблизить" class="flex h-[43px] w-[42px] items-center justify-center border-b border-[#ccc] pt-1"><svg class="size-4" viewBox="0 0 16 16"><path d="M8 0v16M0 8h16" stroke="currentColor" stroke-width="2.500"/></svg></button>
            <button aria-label="Отдалить" class="flex h-[42px] w-[42px] items-center justify-center pt-1"><svg class="size-4" viewBox="0 0 16 16"><path d="M0 8h16" stroke="currentColor" stroke-width="2.500"/></svg></button>
          </div>
          <div class="flex flex-col rounded bg-white">
            <button aria-label="Глобус" class="flex size-[42px] items-center justify-center text-[#27b3cb]"><svg class="size-[26px]" viewBox="0 0 26 26"><circle cx="13" cy="13" r="12.500" fill="currentColor"/><g fill="none" stroke="#fff" stroke-width="2"><path d="M-1 10C7 7 17 0 19-1M1 19C9 19 20 11 23 3M8 26c8-2 15-8 18-12M7 0c-1 6 5 17 12 22M17 0c1 8 5 14 9 18M0 8c1 8 6 15 12 18"/></g></svg></button>
            <button aria-label="Помещения" class="flex size-[42px] items-center justify-center"><svg class="h-6 w-[21px]" viewBox="0 0 21 24"><path d="M1.500 1.500L13 0v24H0v-2h1.500z" fill="currentColor"/><path d="M13 2h6v20h-6" fill="none" stroke="currentColor" stroke-width="2"/><circle cx="10" cy="12" r="1.500" fill="#fff"/></svg></button>
          </div>
        </div>

        <div class="absolute right-6 bottom-0 flex flex-col items-end gap-2 font-['Liberation_Sans',sans-serif] text-lg leading-[26px] text-[#333]">
          <div class="h-[28px] w-[146px] border-[3px] border-t-0 border-[#777] bg-white/50 pl-2">1000 km</div>
          <p class="bg-white/70 px-2 whitespace-nowrap"><a href="#" class="text-[#0078a8]">Leaflet</a> | © <a href="#" class="text-[#0078a8]">OpenStreetMap</a> contributors</p>
        </div>
      </div>
    </section>
  </div>
</body>
</html>
